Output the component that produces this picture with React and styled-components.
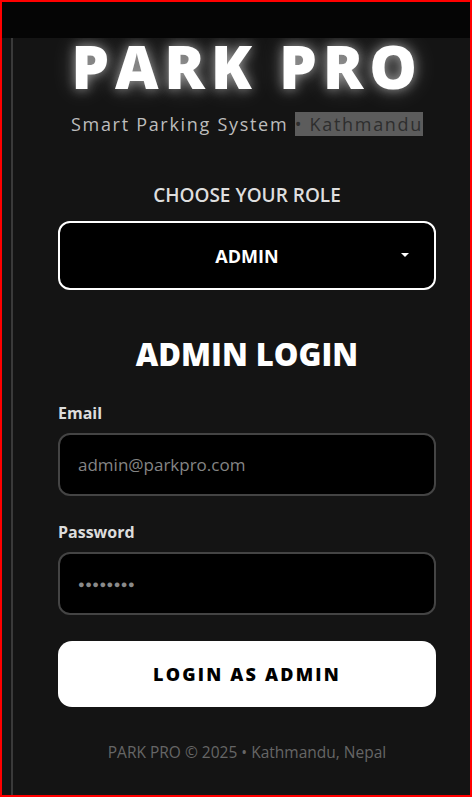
import React from "react";
import styled, { createGlobalStyle } from "styled-components";

const Global = createGlobalStyle`
  html, body { margin: 0; padding: 0; background: #141414; }
  * { box-sizing: border-box; }
`;

const Frame = styled.div`
  width: 472px;
  height: 797px;
  border: 2px solid #ff0000;
  display: flex;
  flex-direction: column;
  overflow: hidden;
  background: #141414;
  font-family: "Open Sans", "Noto Sans", sans-serif;
`;

const TopBar = styled.div`
  height: 36px;
  flex: none;
  background: #050505;
  position: relative;
  z-index: 2;
`;

const Body = styled.div`
  flex: 1;
  display: flex;
  padding-left: 9px;
`;

const Panel = styled.main`
  flex: 1;
  border-left: 2px solid #3a3a3a;
  padding-left: 45px;
  display: flex;
  flex-direction: column;
`;

const Column = styled.div`
  width: 378px;
  display: flex;
  flex-direction: column;
  align-items: stretch;
`;

const Title = styled.h1`
  margin: 0;
  margin-top: -2px;
  font-size: 60px;
  line-height: 60px;
  font-weight: 800;
  letter-spacing: 5.8px;
  color: #fff;
  text-align: center;
  text-shadow: 0 0 12px rgba(255, 255, 255, 0.55), 0 0 24px rgba(255, 255, 255, 0.25);
`;

const Subtitle = styled.p`
  margin: 16px 0 0;
  font-size: 18px;
  line-height: 24px;
  letter-spacing: 1.7px;
  color: #bdbdbd;
  text-align: center;
`;

const Mark = styled.span`
  background: #5c5c5c;
  color: #2e2e2e;
`;

const RoleLabel = styled.div`
  margin-top: 47px;
  font-size: 19px;
  line-height: 24px;
  font-weight: 600;
  color: #dedede;
  text-align: center;
`;

const Select = styled.div`
  margin-top: 14px;
  height: 69px;
  border: 2px solid #fff;
  border-radius: 12px;
  background: #000;
  display: flex;
  align-items: center;
  justify-content: center;
  position: relative;
  color: #fff;
  font-size: 18px;
  font-weight: 700;
`;

const Caret = styled.span`
  position: absolute;
  right: 25px;
  top: 50%;
  margin-top: -3px;
  width: 0;
  height: 0;
  border-left: 4px solid transparent;
  border-right: 4px solid transparent;
  border-top: 4px solid #fff;
`;

const FormTitle = styled.h2`
  margin: 44px 0 0;
  font-size: 31px;
  line-height: 40px;
  font-weight: 800;
  color: #fff;
  text-align: center;
`;

const Field = styled.div`
  display: flex;
  flex-direction: column;
  margin-top: ${(p) => p.$top}px;
`;

const Label = styled.label`
  font-size: 16px;
  line-height: 22px;
  font-weight: 700;
  color: #dcdcdc;
`;

const Input = styled.div`
  margin-top: 9px;
  height: 63px;
  border: 2px solid #444;
  border-radius: 12px;
  background: #000;
  display: flex;
  align-items: center;
  padding-left: 18px;
  color: #858585;
  font-size: 17px;
`;

const Dots = styled.span`
  font-size: 11px;
  letter-spacing: 0.5px;
  color: #8a8a8a;
`;

const Button = styled.button`
  margin-top: 26px;
  height: 66px;
  border: none;
  border-radius: 14px;
  background: #fff;
  color: #000;
  font-family: inherit;
  font-size: 18px;
  font-weight: 800;
  letter-spacing: 2.2px;
  cursor: pointer;
`;

const Footer = styled.footer`
  margin-top: 35px;
  font-size: 15.5px;
  line-height: 20px;
  color: #666;
  text-align: center;
`;

export default function App() {
  return (
    <>
      <Global />
      <Frame>
        <TopBar />
        <Body>
          <Panel>
            <Column>
              <Title>PARK PRO</Title>
              <Subtitle>
                Smart Parking System <Mark>• Kathmandu</Mark>
              </Subtitle>
              <RoleLabel>CHOOSE YOUR ROLE</RoleLabel>
              <Select>
                ADMIN
                <Caret />
              </Select>
              <FormTitle>ADMIN LOGIN</FormTitle>
              <Field $top={28}>
                <Label>Email</Label>
                <Input>admin@parkpro.com</Input>
              </Field>
              <Field $top={25}>
                <Label>Password</Label>
                <Input>
                  <Dots>●●●●●●●●</Dots>
                </Input>
              </Field>
              <Button>LOGIN AS ADMIN</Button>
              <Footer>PARK PRO © 2025 • Kathmandu, Nepal</Footer>
            </Column>
          </Panel>
        </Body>
      </Frame>
    </>
  );
}
